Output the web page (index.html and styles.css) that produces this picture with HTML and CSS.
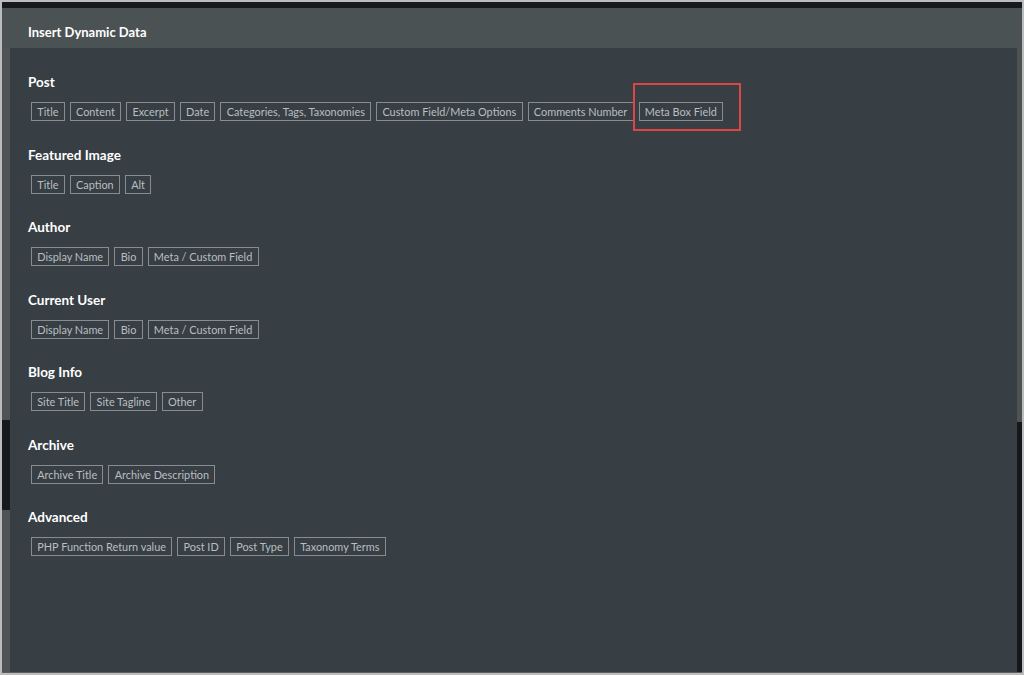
FILE: index.html
```html
<!DOCTYPE html>
<html lang="en">
<head>
<meta charset="utf-8">
<title>Insert Dynamic Data</title>
<link rel="stylesheet" href="styles.css">
</head>
<body>
<div class="frame">
  <div class="topbar"></div>
  <div class="dialog">
    <header class="dialog-head">Insert Dynamic Data</header>
    <div class="dialog-row">
      <div class="strip strip-left"></div>
      <main class="dialog-body">
        <section class="group">
          <h3 class="group-title">Post</h3>
          <div class="chips">
            <span class="chip">Title</span>
            <span class="chip">Content</span>
            <span class="chip">Excerpt</span>
            <span class="chip">Date</span>
            <span class="chip">Categories, Tags, Taxonomies</span>
            <span class="chip">Custom Field/Meta Options</span>
            <span class="chip">Comments Number</span>
            <span class="highlight"><span class="chip">Meta Box Field</span></span>
          </div>
        </section>
        <section class="group">
          <h3 class="group-title">Featured Image</h3>
          <div class="chips">
            <span class="chip">Title</span>
            <span class="chip">Caption</span>
            <span class="chip">Alt</span>
          </div>
        </section>
        <section class="group">
          <h3 class="group-title">Author</h3>
          <div class="chips">
            <span class="chip">Display Name</span>
            <span class="chip">Bio</span>
            <span class="chip">Meta / Custom Field</span>
          </div>
        </section>
        <section class="group">
          <h3 class="group-title">Current User</h3>
          <div class="chips">
            <span class="chip">Display Name</span>
            <span class="chip">Bio</span>
            <span class="chip">Meta / Custom Field</span>
          </div>
        </section>
        <section class="group">
          <h3 class="group-title">Blog Info</h3>
          <div class="chips">
            <span class="chip">Site Title</span>
            <span class="chip">Site Tagline</span>
            <span class="chip">Other</span>
          </div>
        </section>
        <section class="group">
          <h3 class="group-title">Archive</h3>
          <div class="chips">
            <span class="chip">Archive Title</span>
            <span class="chip">Archive Description</span>
          </div>
        </section>
        <section class="group">
          <h3 class="group-title">Advanced</h3>
          <div class="chips">
            <span class="chip">PHP Function Return value</span>
            <span class="chip">Post ID</span>
            <span class="chip">Post Type</span>
            <span class="chip">Taxonomy Terms</span>
          </div>
        </section>
      </main>
      <div class="strip strip-right"></div>
    </div>
    <div class="bottom-edge"></div>
  </div>
</div>
</body>
</html>
```

FILE: styles.css
```css
* { box-sizing: border-box; }

html, body {
  margin: 0;
  padding: 0;
  background: #bcbcbc;
}

body {
  font-family: "Lato", "Liberation Sans", sans-serif;
  width: 1024px;
  height: 675px;
  overflow: hidden;
}

.frame {
  width: 1024px;
  height: 675px;
  border: 2px solid #bcbcbc;
  display: flex;
  flex-direction: column;
  background: #4d5255;
}

.topbar {
  height: 6px;
  flex: none;
  background: #16191e;
}

.dialog {
  flex: 1;
  display: flex;
  flex-direction: column;
  min-height: 0;
}

.dialog-head {
  height: 40px;
  flex: none;
  display: flex;
  align-items: center;
  padding: 7px 0 0 26px;
  background: #4b5254;
  color: #ffffff;
  font-weight: 700;
  font-size: 13px;
}

.dialog-row {
  flex: 1;
  display: flex;
  min-height: 0;
}

.strip {
  flex: none;
}

.strip-left {
  width: 8px;
  background: linear-gradient(to bottom, #4e5356 0, #4e5356 372px, #16191e 372px, #16191e 462px, #4e5356 462px);
}

.strip-right {
  width: 5px;
  background: linear-gradient(to bottom, #4d5253 0, #4d5253 374px, #14171c 374px);
}

.dialog-body {
  flex: 1;
  background: #373e44;
  padding: 25px 18px 0;
}

.bottom-edge {
  height: 1px;
  flex: none;
  background: #5b5f61;
}

.group {
  height: 72.5px;
}

.group-title {
  margin: 0;
  height: 18px;
  line-height: 18px;
  font-size: 13.5px;
  font-weight: 700;
  color: #ffffff;
}

.chips {
  display: flex;
  align-items: center;
  gap: 5px;
  margin-top: 11px;
  padding-left: 3px;
}

.chip {
  display: inline-flex;
  align-items: center;
  height: 19px;
  padding: 0 5.25px;
  border: 1px solid #868c90;
  color: #babec1;
  font-size: 10.9px;
  white-space: nowrap;
}

.highlight {
  position: relative;
  display: inline-flex;
}

.highlight::after {
  content: "";
  position: absolute;
  left: -6px;
  right: -18px;
  top: -19px;
  bottom: -10px;
  border: 2px solid #dc4446;
  pointer-events: none;
}
```
